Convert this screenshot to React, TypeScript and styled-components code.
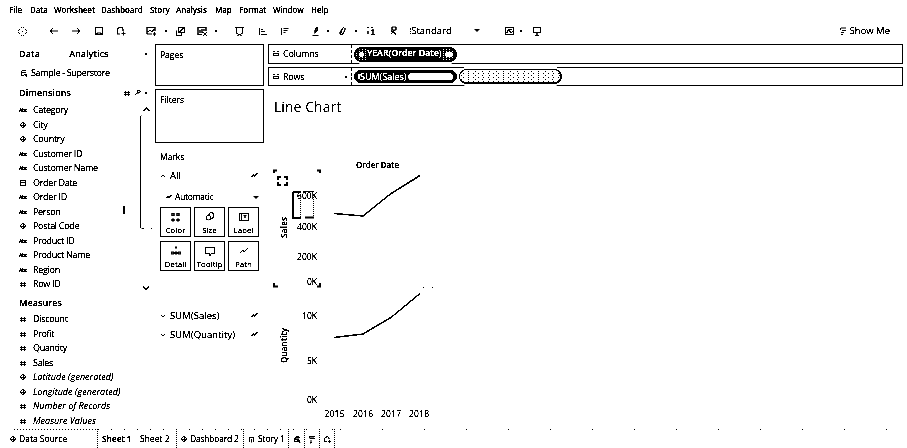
import React from "react";
import styled, { createGlobalStyle } from "styled-components";

const Global = createGlobalStyle`
  * { box-sizing: border-box; }
  body { margin: 0; background: #fff; overflow: hidden; }
`;

const Shell = styled.div`
  width: 907px; height: 448px; display: flex; flex-direction: column;
  background: #fff; color: #000; overflow: hidden;
  font-family: "Open Sans", "Noto Sans", sans-serif; font-size: 9px; line-height: 14px;
  filter: grayscale(1) contrast(12);
`;
const Txt = styled.span<{ $s?: number; $ls?: number; $b?: number; $i?: boolean }>`
  font-size: ${p => p.$s ?? 9}px; letter-spacing: ${p => p.$ls ?? 0}px;
  font-weight: ${p => p.$b ?? 400}; font-style: ${p => (p.$i ? "italic" : "normal")};
  -webkit-text-stroke: 0.2px currentColor;
  white-space: nowrap;
`;
const MenuBar = styled.nav`display: flex; height: 20px; padding-left: 9px; align-items: center; flex: none;`;
const MenuItem = styled.span<{ $w: number }>`
  width: ${p => p.$w}px; font-size: 8px; font-weight: 600; white-space: nowrap; letter-spacing: -0.1px;
  -webkit-text-stroke: 0.2px #000;
`;
const ToolBar = styled.div`display: flex; align-items: center; height: 21px; margin-bottom: 1px; flex: none; padding-right: 17px;`;
const Slot = styled.span<{ $ml: number; $w?: number }>`
  display: flex; align-items: center; justify-content: center; flex: none; height: 12px;
  margin-left: ${p => p.$ml}px; width: ${p => p.$w ?? 12}px;
`;
const ShowMe = styled.div`display: flex; align-items: center; gap: 1px; margin-left: auto;`;
const Dot = styled.i`width: 2px; height: 2px; background: #000;`;
const Dotted = styled.i`width: 1px; height: 6px; margin-left: -12px; border-left: 1px dotted #000;`;
const Caret = styled.i`border: 3px solid transparent; border-top: 3px solid #000; border-bottom: 0;`;
const Main = styled.div`display: flex; flex: none; height: 387px; padding-top: 2px;`;

const DataPane = styled.aside`width: 155px; display: flex; flex: none; flex-direction: column; padding-left: 19px;`;
const Row = styled.div<{ $h: number; $gap?: number }>`
  height: ${p => p.$h}px; display: flex; align-items: center; flex: none; gap: ${p => p.$gap ?? 0}px;
`;
const Push = styled.span<{ $pr?: number }>`
  margin-left: auto; padding-right: ${p => p.$pr ?? 0}px; display: flex; gap: 4px; align-items: center;
`;
const DimArea = styled.div`display: flex; flex: none; height: 191px;`;
const FieldList = styled.div<{ $pt: number }>`
  width: 106px; padding-top: ${p => p.$pt}px; flex: none; display: flex; flex-direction: column;
`;
const Field = styled.div`display: grid; grid-template-columns: 14px 1fr; height: 14.5px; align-items: center; flex: none;`;
const FieldIcon = styled.span`display: flex; width: 8px; justify-content: center;`;
const Scroll = styled.div`margin-left: 14px; width: 14px; display: flex; flex-direction: column; align-items: center; padding-top: 2px;`;
const Thumb = styled.div`
  width: 13px; height: 114px; border-left: 1px solid #000; border-radius: 3px;
  background:
    linear-gradient(#000, #000) 1px 100% / 2px 1px no-repeat,
    linear-gradient(#000, #000) 100% 100% / 2px 1px no-repeat;
  margin: 1px 0 55px;
`;
const Mark = styled.div`width: 2px; height: 8px; background: #000; margin: 103px 0 0 -2px;`;

const Cards = styled.section`width: 109px; margin-right: 4px; flex: none; display: flex; flex-direction: column;`;
const Card = styled.div<{ $h: number; $mb: number }>`
  height: ${p => p.$h}px; margin-bottom: ${p => p.$mb}px; border: 1px solid #000; padding: 3px 4px; line-height: 13px; flex: none;
`;
const MarkRow = styled.div<{ $h: number }>`
  height: ${p => p.$h}px; display: flex; align-items: center; padding: 0 5px; gap: 4px; flex: none;
`;
const AutoRow = styled(MarkRow)`padding-left: 10px; gap: 2px;`;
const MarkGrid = styled.div`
  display: grid; grid-template-columns: repeat(3, 31px); grid-auto-rows: 30px; gap: 4px 3px; padding-left: 5px; margin-bottom: 35px;
`;
const MarkBtn = styled.div`
  border: 1px solid #000; display: flex; flex-direction: column; align-items: center; justify-content: space-between;
  padding: 3px 0 0; line-height: 12px;
`;
const Work = styled.section`width: 635px; display: flex; flex-direction: column; flex: none;`;
const Shelf = styled.div<{ $h: number; $mb: number }>`
  height: ${p => p.$h}px; margin-bottom: ${p => p.$mb}px; border: 1px solid #000; display: flex; align-items: center; flex: none;
`;
const ShelfName = styled.div`
  width: 83px; height: 100%; border-right: 1px dashed #000; display: flex; align-items: center; gap: 4px; padding: 0 4px;
  margin-right: 2px;
`;
const Pill = styled.div<{ $h: number; $kind: "date" | "sum" | "empty" }>`
  width: 103px; height: ${p => p.$h}px; margin-right: 2px; border-radius: 8px; color: #fff; flex: none;
  display: flex; align-items: center; padding: 0 3px; overflow: hidden; line-height: 11px;
  box-shadow: 0 0 0 2px #fff; border: 1px solid #000;
  ${p => p.$kind === "empty"
    ? `border-right-width: 2px; border-bottom-width: 2px;
       background:
         radial-gradient(circle at 0.5px 0.5px, #000 0.6px, transparent 0.7px) 1px 1px / 7px 4px,
         radial-gradient(circle at 0.5px 0.5px, #000 0.6px, transparent 0.7px) 3px 3px / 5px 4px;`
    : p.$kind === "date"
    ? `border-width: 2px; gap: 2px;
       background: radial-gradient(circle at 0.5px 0.5px, #fff 0.6px, #000 0.7px) 0 0 / 3px 2px;`
    : "background: #000;"}
`;
const DateName = styled(Txt)`background: #000; padding: 0 1px 1px;`;
const PillLead = styled.i<{ $w: number }>`width: ${p => p.$w}px; height: 5px; background: #fff; border-radius: 3px; flex: none;`;
const PillFill = styled.i<{ $w: number; $h: number }>`
  margin-left: auto; width: ${p => p.$w}px; height: ${p => p.$h}px; background: #fff; border-radius: 4px; flex: none;
`;
const SheetTitle = styled.h1`
  margin: 12px 0 0 6px; font-size: 14px; line-height: 18px; font-weight: 400; letter-spacing: 0.05px;
`;

const Tabs = styled.footer`
  height: 19px; display: flex; flex: none; padding-left: 10px;
  background:
    repeating-linear-gradient(90deg, #000 0 1px, transparent 1px 3px) 14px 0 / 84px 1px no-repeat,
    repeating-linear-gradient(90deg, #000 0 1px, transparent 1px 13px) 98px 0 / 236px 1px no-repeat,
    repeating-linear-gradient(90deg, #000 0 1px, transparent 1px 42px) 340px 0 / 567px 1px no-repeat;
`;
const Tab = styled.div<{ $w: number; $pl: number; $line?: boolean }>`
  width: ${p => p.$w}px; padding: 1px 0 0 ${p => p.$pl}px; display: flex; align-items: center; gap: 3px; flex: none;
  border-right: ${p => (p.$line ? "1px dotted #000" : "0")};
`;

const paths: Record<string, string> = {
  logo: "M5 2.500h1M7 2.500h1M2 5.500h1M2 7.500h1M5 10.500h1M7 10.500h1M10 5.500h1M10 7.500h1M3 4.500h1M9 4.500h1M3 8.500h1M9 8.500h1M6 6.500h1",
  back: "M10.500 6H2M5 3L2 6l3 3",
  fwd: "M1.500 6H10M7 3l3 3-3 3",
  save: "M2.500 2.500h7v7h-7zM4 9.500V8h4v1.500",
  add: "M3 3.500q3-2.500 5 0V6M2.500 3.500V9h3M8.500 6.500v4M6.500 8.500h4",
  sheet: "M10 6V2.500H2V9h5M3 7l2-2 2 2 2-3M9.500 7v4M7.500 9h4",
  copy: "M4.500 2.500h6v5h-6zM2.500 5.500v5h5V8M5 7l5-4",
  clear: "M10 6V2.500H2V9.500h4M4 8V5M6 8V4M8 6V4M7 7l4 4M11 7l-4 4",
  swap: "M3.500 3v5q3 3 6 0V3q-3-1.500-6 0M2 2.500h2M9 2.500h2M5 10v1M8 10v1",
  asc: "M3.500 3v7M5 4.500h2M5 6.500h4M5 9.500h6",
  desc: "M3.500 3v7M5.500 3.500h5M5.500 5.500h4M5.500 7.500h2",
  pen: "M7 2L5 5v3l3-3zM6 4v4M2.500 10.500h6",
  clip: "M8 2L4 7v2l2 1 3-5V3M6 5L5 8",
  label: "M2 2.500h2M6 2.500h2M6 5.500h3M3 6v3M8 4v6M6 9.500h4",
  pin: "M5 2h4v3H5zM4 6l5 3M8 5L4 9M7 8l2 2",
  image: "M2.500 2.500h8v7h-8zM3 8l3-3 2 3 2-2M5 4.500h4M4.500 5v3",
  screen: "M2.500 2.500h7v5h-7zM6 8v2M4 10.500h4",
  show: "M2 2.500h7M3 5h6M2 8h4M2 10.500h3M1.500 2v3",
  db: "M3 3.500q3-2 6 0M2.500 3.500V9h4M3 5.500h5M6 7l4 3M9 7v4",
  line: "M2 8l3-3 1 2 4-4",
  color: "M2 2.500h2v2H2zM7 2.500h2v2H7zM2 8h2v2H2zM7 8h2v2H7z",
  size: "M7 1.500a3 3 0 1 1-.5 6M4.500 4.500a2.300 2.300 0 1 0 .1 0M5 5q-.5-3.500 2.500-3.500",
  text: "M1.500 2.500h9v7h-9zM3.500 2v7M5.500 4.500h3M7 4.500v3",
  detail: "M5 2h2M5 3h2M1.500 7h2v2h-2zM5 7h2v2H5zM8.500 7h2v2h-2z",
  tip: "M1.500 2.500h9v6h-3L6 10.500 5 8.500H1.500z",
  date: "M2.500 2.500h7v7h-7zM3 5.500h6",
  up: "M2 8l4-4 4 4",
  down: "M2 4l4 4 4-4",
  find: "M8 2a2.500 2.500 0 1 0 .1 0M6 6L2 10",
  bars: "M2 2v9M2 3h8M6 5v6M10 3v8",
};
const glyphs: Record<string, string> = {
  hash: "M1 1h1v5h-1zM4 1h1v5h-1zM0 2h6v1h-6zM0 4h6v1h-6z",
  globe: "M2 0h2v1h-2zM1 1h1v1h-1zM4 1h1v1h-1zM0 2h1v2h-1zM5 2h1v2h-1zM1 3h4v1h-4zM1 4h1v1h-1zM4 4h1v1h-1zM2 5h2v1h-2zM3 1h1v5h-1z",
  shelf: "M0 0h2v1h-2zM4 0h2v1h-2zM0 2h6v1h-6zM0 4h6v1h-6zM0 3h1v1h-1zM5 3h1v1h-1z",
};
const Svg = styled.svg`display: block; flex: none; fill: none; stroke: #000;`;
const GlyphSvg = styled.svg`display: block; flex: none; fill: #000;`;
const Icon = ({ n, s = 12, w = 1.05 }: { n: string; s?: number; w?: number }) => (
  <Svg width={s} height={s} viewBox="0 0 12 12" strokeWidth={(w * 12) / s}><path d={paths[n]} /></Svg>
);
const Glyph = ({ n }: { n: string }) => (
  <GlyphSvg width="6" height="6" viewBox="0 0 6 6" shapeRendering="crispEdges"><path d={glyphs[n]} /></GlyphSvg>
);

const menu: [string, number][] = [["File", 21], ["Data", 24], ["Worksheet", 47], ["Dashboard", 49], ["Story", 26], ["Analysis", 39], ["Map", 24], ["Format", 34], ["Window", 38], ["Help", 20]];
const tools: [string, number][] = [["logo", 16], ["back", 20], ["fwd", 10], ["save", 11], ["add", 10], ["sheet", 18], [".", 7], ["copy", 6], ["clear", 10], [".", 6], ["swap", 15], ["asc", 11], ["desc", 10], ["pen", 20], [".", 4], ["clip", 6], [".", 6], ["label", 7], ["pin", 10]];
const dims: [string, string][] = [["abc", "Category"], ["globe", "City"], ["globe", "Country"], ["abc", "Customer ID"], ["abc", "Customer Name"], ["date", "Order Date"], ["abc", "Order ID"], ["abc", "Person"], ["globe", "Postal Code"], ["abc", "Product ID"], ["abc", "Product Name"], ["abc", "Region"], ["hash", "Row ID"]];
const measures: [string, string, boolean?][] = [["hash", "Discount"], ["hash", "Profit"], ["hash", "Quantity"], ["hash", "Sales"], ["globe", "Latitude (generated)", true], ["globe", "Longitude (generated)", true], ["hash", "Number of Records", true], ["hash", "Measure Values", true]];
const marks: [string, string][] = [["color", "Color"], ["size", "Size"], ["text", "Label"], ["detail", "Detail"], ["tip", "Tooltip"], ["line", "Path"]];

const FieldRow = ({ icon, name, italic }: { icon: string; name: string; italic?: boolean }) => (
  <Field>
    <FieldIcon>
      {icon === "abc" ? <Txt $s={5} $b={600} $ls={-0.3}>Abc</Txt> : icon === "date" ? <Icon n="date" s={8} /> : <Glyph n={icon} />}
    </FieldIcon>
    <Txt $i={italic} $ls={italic ? 0.03 : -0.3}>{name}</Txt>
  </Field>
);

const ChartSvg = styled.svg`
  display: block; margin-top: 3px; font-family: "Open Sans", sans-serif; font-size: 8.5px; fill: #000; flex: none;
  text { stroke: #000; stroke-width: 0.2px; }
`;
const Chart = () => (
  <ChartSvg width="635" height="310" viewBox="268 119 635 310">
    <text x="356" y="168" textLength="43" fontSize="8" fontWeight="600">Order Date</text>
    <g fill="none" stroke="#000" strokeWidth="1.5">
      <path d="M334 213.500l29 2.500 28-22.500 29-18" />
      <path d="M334 337.500l29-3.500 28-16.500 29-24" />
    </g>
    <g fill="none" stroke="#000" strokeWidth="2">
      <path d="M274 173v-2.500h3M317 170.500h3v2.500M274 283v3.500h4M317 286.500h3V283" />
      <path strokeWidth="1.500" d="M278 180v-3h3M284 177h3v3M278 182v3h3M284 185h3v-3" />
      <path d="M293 192v26h8M293 192h8M305 217.500h9" />
    </g>
    <g fill="none" stroke="#000"><path d="M300.500 192v25M313.500 195v22" strokeDasharray="1 1" /><path d="M303 191.500h11" /></g>
    <g textAnchor="end">
      <text x="317" y="199" textLength="20">600K</text>
      <text x="317" y="229.500" textLength="20">400K</text>
      <text x="317" y="260" textLength="20">200K</text>
      <text x="317" y="284.500" textLength="10">0K</text>
      <text x="317" y="319" textLength="15">10K</text>
      <text x="317" y="364" textLength="10">5K</text>
      <text x="317" y="402.500" textLength="10">0K</text>
    </g>
    <g fontWeight="600" fontSize="8">
      <text transform="translate(287 238) rotate(-90)" textLength="21">Sales</text>
      <text transform="translate(287 363) rotate(-90)" textLength="35">Quantity</text>
    </g>
    <text x="324.500" y="417" textLength="20">2015</text>
    <text x="353" y="417" textLength="20">2016</text>
    <text x="381" y="417" textLength="20">2017</text>
    <text x="409" y="417" textLength="20">2018</text>
    <path d="M423 287h1v1h-1zM432 287h1v1h-1z" />
  </ChartSvg>
);

export default function App() {
  return (
    <Shell>
      <Global />
      <MenuBar>{menu.map(([m, w]) => <MenuItem key={m} $w={w}>{m}</MenuItem>)}</MenuBar>
      <ToolBar>
        {tools.map(([n, ml], i) => <Slot key={i} $ml={ml} $w={n === "." ? 4 : 12}>{n === "." ? <Dot /> : <Icon n={n} />}</Slot>)}
        <Slot $ml={18} $w={40}><Dotted /><Txt $s={9.5}>Standard</Txt></Slot>
        <Slot $ml={14}><Caret /></Slot>
        <Slot $ml={20}><Icon n="image" /></Slot>
        <Slot $ml={4} $w={4}><Dot /></Slot>
        <Slot $ml={8}><Icon n="screen" /></Slot>
        <ShowMe><Icon n="show" s={10} /><Txt $s={9.5}>Show Me</Txt></ShowMe>
      </ToolBar>
      <Main>
        <DataPane>
          <Row $h={20} $gap={29}><Txt $b={600} $ls={0.15}>Data</Txt><Txt $b={600}>Analytics</Txt><Push $pr={8}><Dot /></Push></Row>
          <Row $h={18} $gap={2}><Icon n="db" s={10} /><Txt $ls={-0.33}>Sample - Superstore</Txt></Row>
          <Row $h={21}><Txt $b={600} $ls={0.1}>Dimensions</Txt><Push $pr={8}><Glyph n="hash" /><Icon n="find" s={7} /><Dot /></Push></Row>
          <DimArea>
            <FieldList $pt={0}>{dims.map(([i, n]) => <FieldRow key={n} icon={i} name={n} />)}</FieldList>
            <Mark />
            <Scroll><Icon n="up" s={9} w={1.4} /><Thumb /><Icon n="down" s={8} w={1.6} /></Scroll>
          </DimArea>
          <Row $h={17}><Txt $b={600} $ls={0.1}>Measures</Txt></Row>
          <FieldList $pt={1}>{measures.map(([i, n, it]) => <FieldRow key={n} icon={i} name={n} italic={it} />)}</FieldList>
        </DataPane>
        <Cards>
          <Card $h={42} $mb={3}><Txt $s={8.5}>Pages</Txt></Card>
          <Card $h={54} $mb={7}><Txt $s={8.5}>Filters</Txt></Card>
          <MarkRow $h={14}><Txt $s={8.5}>Marks</Txt></MarkRow>
          <MarkRow $h={23}><Icon n="up" s={6} /><Txt $s={9.5}>All</Txt><Push><Icon n="line" s={9} w={1.3} /></Push></MarkRow>
          <AutoRow $h={20}><Icon n="line" s={8} w={1.3} /><Txt $s={8.5} $ls={-0.25}>Automatic</Txt><Push><Caret /></Push></AutoRow>
          <MarkGrid>
            {marks.map(([n, t]) => <MarkBtn key={t}><Icon n={n} /><Txt $s={8}>{t}</Txt></MarkBtn>)}
          </MarkGrid>
          {["SUM(Sales)", "SUM(Quantity)"].map(t => (
            <MarkRow key={t} $h={19}><Icon n="down" s={6} /><Txt $s={9.5} $ls={0.05}>{t}</Txt><Push><Icon n="line" s={9} w={1.3} /></Push></MarkRow>
          ))}
        </Cards>
        <Work>
          <Shelf $h={20} $mb={3}>
            <ShelfName><Glyph n="shelf" /><Txt $ls={-0.2}>Columns</Txt></ShelfName>
            <Pill $h={15} $kind="date"><PillLead $w={5} /><DateName $b={600} $s={8.8}>YEAR(Order Date)</DateName><PillFill $w={8} $h={5} /></Pill>
          </Shelf>
          <Shelf $h={19} $mb={0}>
            <ShelfName><Glyph n="shelf" /><Txt $ls={-0.2}>Rows</Txt><Push><Dot /></Push></ShelfName>
            <Pill $h={13} $kind="sum"><PillLead $w={2} /><Txt $s={9}>SUM(Sales)</Txt><PillFill $w={45} $h={7} /></Pill>
            <Pill $h={15} $kind="empty" />
          </Shelf>
          <SheetTitle>Line Chart</SheetTitle>
          <Chart />
        </Work>
      </Main>
      <Tabs>
        <Tab $w={88} $pl={0} $line><Glyph n="globe" /><Txt $s={8.5}>Data Source</Txt></Tab>
        <Tab $w={39} $pl={4}><Txt $s={8.5} $b={600} $ls={-0.1}>Sheet 1</Txt></Tab>
        <Tab $w={40} $pl={3} $line><Txt $s={8.5}>Sheet 2</Txt></Tab>
        <Tab $w={67} $pl={4} $line><Glyph n="globe" /><Txt $s={8.5} $ls={-0.2}>Dashboard 2</Txt></Tab>
        <Tab $w={45} $pl={4} $line><Icon n="bars" s={7} /><Txt $s={8.5} $ls={-0.15}>Story 1</Txt></Tab>
        <Tab $w={16} $pl={4} $line><Icon n="db" s={9} /></Tab>
        <Tab $w={15} $pl={3} $line><Icon n="show" s={9} /></Tab>
        <Tab $w={15} $pl={3} $line><Icon n="add" s={9} /></Tab>
      </Tabs>
    </Shell>
  );
}
